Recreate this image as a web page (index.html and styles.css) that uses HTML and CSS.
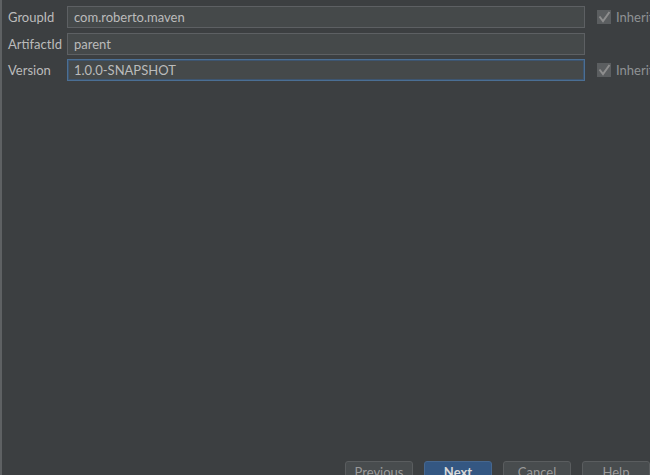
FILE: index.html
```
<!DOCTYPE html>
<html>
<head>
<meta charset="utf-8">
<link rel="stylesheet" href="styles.css">
</head>
<body>
<div class="dialog">
  <div class="form">
    <div class="row">
      <span class="label">GroupId</span>
      <div class="field">com.roberto.maven</div>
      <label class="inherit"><span class="check"><svg width="14" height="14" viewBox="0 0 14 14"><path d="M2.5 6.5 L6 11 L12.5 2" fill="none" stroke="#8e8e8e" stroke-width="2"/></svg></span>Inherit</label>
    </div>
    <div class="row r2">
      <span class="label">ArtifactId</span>
      <div class="field">parent</div>
      <span class="inherit"></span>
    </div>
    <div class="row r3">
      <span class="label">Version</span>
      <div class="field focused">1.0.0-SNAPSHOT</div>
      <label class="inherit"><span class="check"><svg width="14" height="14" viewBox="0 0 14 14"><path d="M2.5 6.5 L6 11 L12.5 2" fill="none" stroke="#8e8e8e" stroke-width="2"/></svg></span>Inherit</label>
    </div>
  </div>
  <div class="spacer"></div>
  <div class="buttons">
    <button class="btn">Previous</button>
    <button class="btn primary">Next</button>
    <button class="btn">Cancel</button>
    <button class="btn">Help</button>
  </div>
</div>
</body>
</html>
```
FILE: styles.css
```
html, body {
  margin: 0;
  padding: 0;
  width: 650px;
  height: 475px;
  overflow: hidden;
  background: #3c3f41;
}
.dialog {
  box-sizing: border-box;
  width: 650px;
  height: 475px;
  border-left: 2px solid #5e6163;
  display: flex;
  flex-direction: column;
  font-family: Lato, "Open Sans", sans-serif;
  font-size: 13px;
  color: #bbbbbb;
}
.form {
  padding-top: 6px;
  display: flex;
  flex-direction: column;
}
.row {
  display: flex;
  align-items: center;
  height: 22px;
}
.r2 { margin-top: 5px; }
.r3 { margin-top: 4px; }
.label {
  padding-left: 6px;
  box-sizing: border-box;
  flex: none;
  width: 65px;
}
.field {
  box-sizing: border-box;
  width: 518px;
  height: 22px;
  background: #45494a;
  border: 1px solid #5d6063;
  padding-left: 6px;
  line-height: 20px;
  color: #bbbbbb;
  flex: none;
}
.field.focused {
  border: 1px solid #4b6f94;
  box-shadow: inset 0 0 0 1px #3d5570;
}
.inherit {
  display: flex;
  align-items: center;
  margin-left: 12px;
  gap: 5px;
  color: #8f9294;
  white-space: nowrap;
}
.check {
  width: 14px;
  height: 14px;
  background: #5b5e60;
  display: flex;
  align-items: center;
  justify-content: center;
}
.spacer { flex: 1; }
.buttons {
  display: flex;
  justify-content: flex-end;
  gap: 11px;
  height: 14px;
  align-items: flex-start;
}
.btn {
  box-sizing: border-box;
  width: 68px;
  height: 22px;
  border: 1px solid #5a5d5f;
  border-radius: 3px;
  background: #484c4e;
  color: #9a9a9a;
  font-family: Lato, "Open Sans", sans-serif;
  font-size: 13px;
  padding: 0;
  line-height: 20px;
  flex: none;
}
.btn.primary {
  background: #345782;
  border-color: #46678f;
  color: #d8d8d8;
  font-weight: bold;
}
```
